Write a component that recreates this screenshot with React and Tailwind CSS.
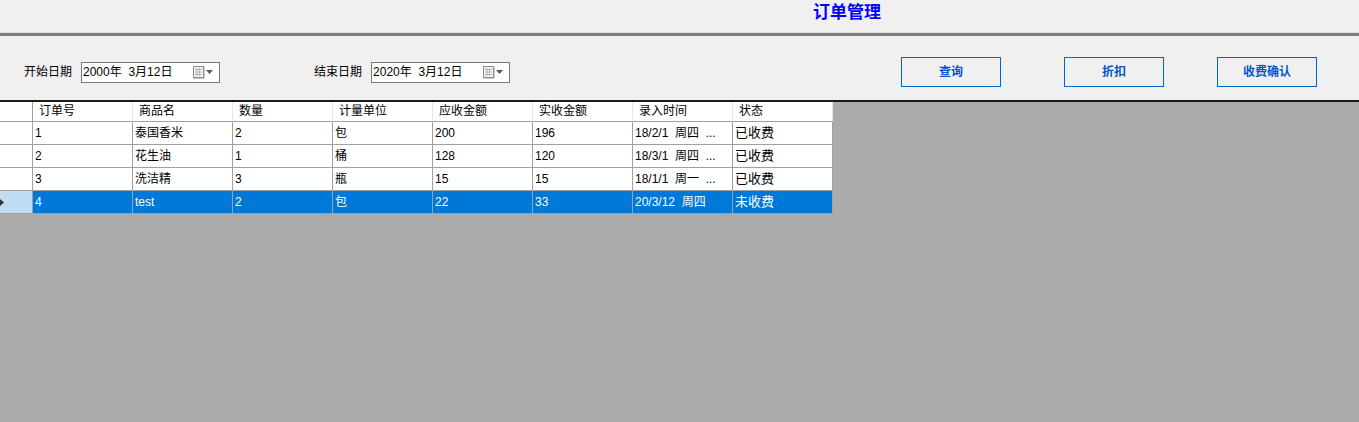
import React from "react";

const columns = ["订单号", "商品名", "数量", "计量单位", "应收金额", "实收金额", "录入时间", "状态"];

const rows = [
  ["1", "泰国香米", "2", "包", "200", "196", "18/2/1  周四  ...", "已收费"],
  ["2", "花生油", "1", "桶", "128", "120", "18/3/1  周四  ...", "已收费"],
  ["3", "洗洁精", "3", "瓶", "15", "15", "18/1/1  周一  ...", "已收费"],
  ["4", "test", "2", "包", "22", "33", "20/3/12  周四", "未收费"],
];

const font = { fontFamily: '"Liberation Sans", "Noto Sans CJK SC", sans-serif' };

const CalendarIcon = () => (
  <svg width="22" height="14" viewBox="0 0 22 14">
    <rect x="1.5" y="1.5" width="10" height="11" fill="#f4f4f4" stroke="#8c8c8c" />
    <path d="M3 4.5h7M3 7h7M3 9.5h7M5 3v8M7.5 3v8" stroke="#b8b8b8" strokeWidth="1" />
    <path d="M2 13.5h10M12.5 2v11" stroke="#c8c8c8" />
    <path d="M14 5h7l-3.5 4z" fill="#4a5a80" />
  </svg>
);

const DatePicker = ({ value }) => (
  <div className="flex items-center justify-between w-[139px] h-[21px] bg-white border border-[#7a7a7a] pl-[1px] pr-[5px] text-[12px] text-black">
    <span className="whitespace-pre">{value}</span>
    <CalendarIcon />
  </div>
);

const Btn = ({ label }) => (
  <button className="w-[100px] h-[30px] border border-[#0066cc] text-[#0055cc] text-[12px] font-bold bg-transparent">
    {label}
  </button>
);

export default function App() {
  return (
    <div className="w-[1359px] h-[422px] bg-[#ababab] overflow-hidden" style={font}>
      {/* title bar */}
      <div className="h-[36px] bg-[#f0f0f0] border-b-[3px] border-[#808080]">
        <div className="h-[33px] border-b border-[#dedede] pl-[813px] pt-[1px]">
          <span className="text-[17px] font-bold text-[#0000ff] leading-[20px]">订单管理</span>
        </div>
      </div>

      {/* filter bar */}
      <div className="h-[66px] bg-[#f0f0f0] border-b-2 border-[#1a1a1a] flex items-center pt-[8px] text-[12px] text-black">
        <span className="ml-[24px] mr-[9px]">开始日期</span>
        <DatePicker value="2000年  3月12日" />
        <span className="ml-[94px] mr-[9px]">结束日期</span>
        <DatePicker value="2020年  3月12日" />
        <div className="ml-[391px] flex items-center gap-[63px]">
          <Btn label="查询" />
          <Btn label="折扣" />
        </div>
        <div className="ml-[53px]">
          <Btn label="收费确认" />
        </div>
      </div>

      {/* grid */}
      <div className="grid grid-cols-[33px_repeat(8,100px)] w-[833px] text-[12px] text-black">
        <div className="h-[20px] bg-white border-r border-b border-[#a0a0a0]" />
        {columns.map((c) => (
          <div
            key={c}
            className="h-[20px] bg-white border-r border-[#e6e6e6] border-b-[#a0a0a0] border-b pl-[6px] leading-[19px] whitespace-nowrap"
          >
            {c}
          </div>
        ))}
        {rows.map((r, i) => {
          const sel = i === rows.length - 1;
          return (
            <React.Fragment key={i}>
              <div
                className={`h-[23px] border-r border-b border-[#a0a0a0] flex items-center ${
                  sel ? "bg-[#bfdcf2]" : "bg-white"
                }`}
              >
                {sel && (
                  <svg width="6" height="9" viewBox="0 0 6 9" className="ml-[-1px]">
                    <path d="M0 0l5 4.5L0 9z" fill="#333" />
                  </svg>
                )}
              </div>
              {r.map((v, j) => (
                <div
                  key={j}
                  className={`h-[23px] border-r border-b border-[#a0a0a0] pl-[2px] leading-[22px] whitespace-pre overflow-hidden ${
                    sel ? "bg-[#0078d7] text-white" : "bg-white"
                  } ${j === 7 ? "text-[13px]" : ""}`}
                >
                  {v}
                </div>
              ))}
            </React.Fragment>
          );
        })}
      </div>
    </div>
  );
}
